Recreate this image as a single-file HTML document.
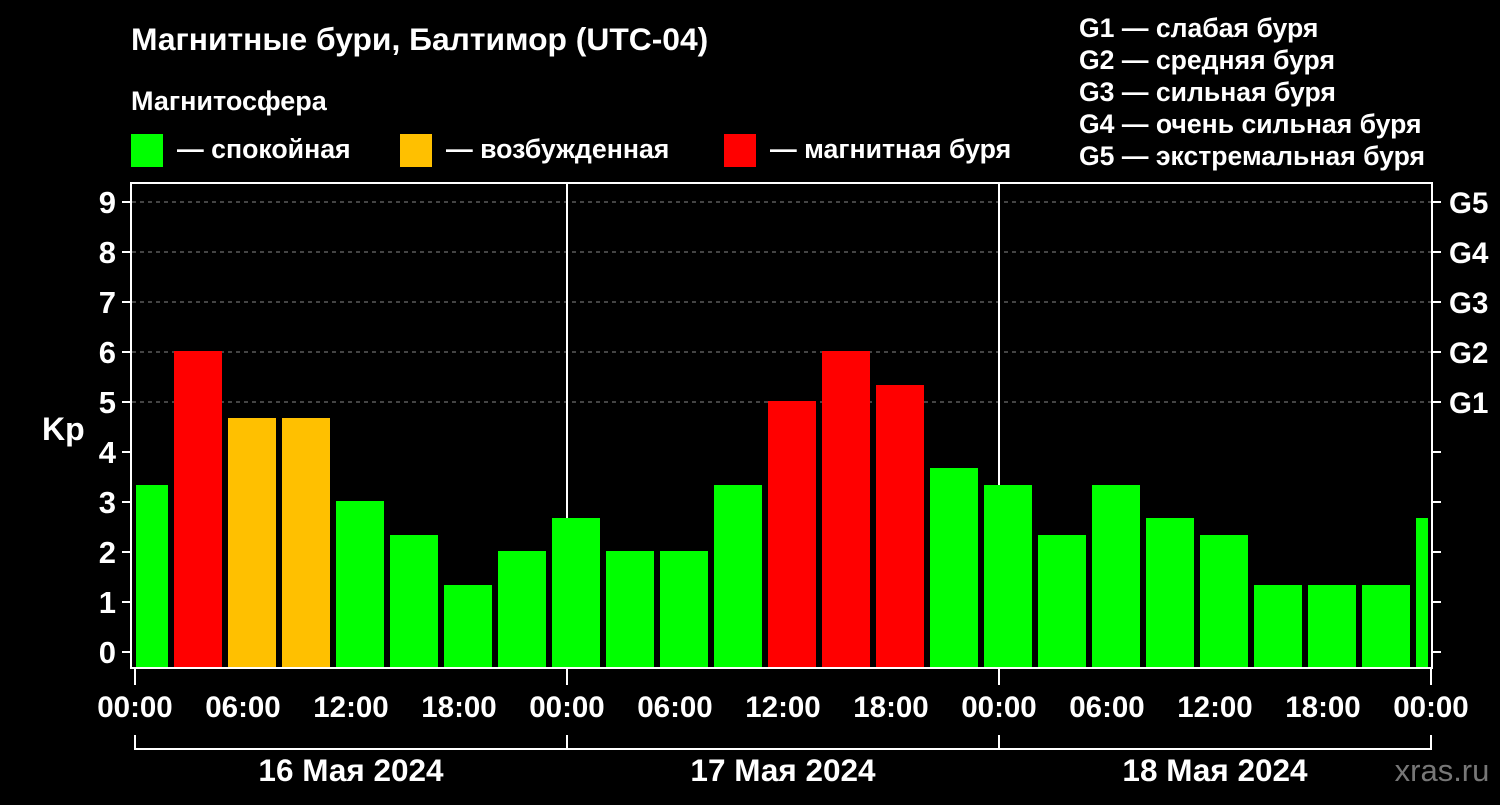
<!DOCTYPE html><html><head><meta charset="utf-8"><style>
body{margin:0;background:#000;width:1500px;height:800px;overflow:hidden}
text{font-family:"Liberation Sans",sans-serif;font-weight:bold;fill:#fff}
</style></head><body>
<svg width="1500" height="800" viewBox="0 0 1500 800">
<text x="131" y="50" font-size="31.8">Магнитные бури, Балтимор (UTC-04)</text>
<text x="131" y="110" font-size="27">Магнитосфера</text>
<rect x="131" y="134" width="32" height="33" fill="#00ff00"/>
<text x="177" y="158" font-size="26.7">— спокойная</text>
<rect x="400" y="134" width="32" height="33" fill="#ffc000"/>
<text x="446" y="158" font-size="26.7">— возбужденная</text>
<rect x="724" y="134" width="32" height="33" fill="#ff0000"/>
<text x="770" y="158" font-size="26.7">— магнитная буря</text>
<g font-size="26.6">
<text x="1079" y="37">G1 — слабая буря</text>
<text x="1079" y="69">G2 — средняя буря</text>
<text x="1079" y="101">G3 — сильная буря</text>
<text x="1079" y="133">G4 — очень сильная буря</text>
<text x="1079" y="165">G5 — экстремальная буря</text>
</g>
<g stroke="#888" stroke-width="1" stroke-dasharray="4,4">
<line x1="132" x2="1431" y1="202" y2="202"/><line x1="132" x2="1431" y1="252" y2="252"/>
<line x1="132" x2="1431" y1="302" y2="302"/><line x1="132" x2="1431" y1="352" y2="352"/>
<line x1="132" x2="1431" y1="402" y2="402"/>
</g>
<g stroke="#fff" stroke-width="2"><line x1="567" y1="183" x2="567" y2="668"/><line x1="999" y1="183" x2="999" y2="668"/></g>
<g>
<rect x="136" y="485" width="32" height="183" fill="#00ff00"/>
<rect x="174" y="351" width="48" height="317" fill="#ff0000"/>
<rect x="228" y="418" width="48" height="250" fill="#ffc000"/>
<rect x="282" y="418" width="48" height="250" fill="#ffc000"/>
<rect x="336" y="501" width="48" height="167" fill="#00ff00"/>
<rect x="390" y="535" width="48" height="133" fill="#00ff00"/>
<rect x="444" y="585" width="48" height="83" fill="#00ff00"/>
<rect x="498" y="551" width="48" height="117" fill="#00ff00"/>
<rect x="552" y="518" width="48" height="150" fill="#00ff00"/>
<rect x="606" y="551" width="48" height="117" fill="#00ff00"/>
<rect x="660" y="551" width="48" height="117" fill="#00ff00"/>
<rect x="714" y="485" width="48" height="183" fill="#00ff00"/>
<rect x="768" y="401" width="48" height="267" fill="#ff0000"/>
<rect x="822" y="351" width="48" height="317" fill="#ff0000"/>
<rect x="876" y="385" width="48" height="283" fill="#ff0000"/>
<rect x="930" y="468" width="48" height="200" fill="#00ff00"/>
<rect x="984" y="485" width="48" height="183" fill="#00ff00"/>
<rect x="1038" y="535" width="48" height="133" fill="#00ff00"/>
<rect x="1092" y="485" width="48" height="183" fill="#00ff00"/>
<rect x="1146" y="518" width="48" height="150" fill="#00ff00"/>
<rect x="1200" y="535" width="48" height="133" fill="#00ff00"/>
<rect x="1254" y="585" width="48" height="83" fill="#00ff00"/>
<rect x="1308" y="585" width="48" height="83" fill="#00ff00"/>
<rect x="1362" y="585" width="48" height="83" fill="#00ff00"/>
<rect x="1416" y="518" width="12" height="150" fill="#00ff00"/>
</g>
<g stroke="#fff" stroke-width="2" fill="none">
<rect x="131" y="183" width="1301" height="485"/>
<path d="M122 202H131M122 252H131M122 302H131M122 352H131M122 402H131M122 452H131M122 502H131M122 552H131M122 602H131M122 652H131"/>
<path d="M1432 202H1441M1432 252H1441M1432 302H1441M1432 352H1441M1432 402H1441M1432 452H1441M1432 502H1441M1432 552H1441M1432 602H1441M1432 652H1441"/>
<path d="M135 668V685M567 668V685M999 668V685M1431 668V685M135 735V749H1431V735M567 735V749M999 735V749"/>
</g>
<g font-size="31" text-anchor="end">
<text x="116" y="213">9</text><text x="116" y="263">8</text><text x="116" y="313">7</text><text x="116" y="363">6</text><text x="116" y="413">5</text><text x="116" y="463">4</text><text x="116" y="513">3</text><text x="116" y="563">2</text><text x="116" y="613">1</text><text x="116" y="663">0</text>
</g>
<text x="42" y="440" font-size="32">Kp</text>
<g font-size="29.5"><text x="1449" y="213">G5</text><text x="1449" y="263">G4</text><text x="1449" y="313">G3</text><text x="1449" y="363">G2</text><text x="1449" y="413">G1</text></g>
<g font-size="29.5" text-anchor="middle">
<text x="135" y="717">00:00</text><text x="243" y="717">06:00</text><text x="351" y="717">12:00</text><text x="459" y="717">18:00</text>
<text x="567" y="717">00:00</text><text x="675" y="717">06:00</text><text x="783" y="717">12:00</text><text x="891" y="717">18:00</text>
<text x="999" y="717">00:00</text><text x="1107" y="717">06:00</text><text x="1215" y="717">12:00</text><text x="1323" y="717">18:00</text><text x="1431" y="717">00:00</text>
<text x="351" y="781" font-size="31.5">16 Мая 2024</text><text x="783" y="781" font-size="31.5">17 Мая 2024</text><text x="1215" y="781" font-size="31.5">18 Мая 2024</text>
</g>
<text x="1442" y="781" font-size="31" text-anchor="middle" style="fill:#777;font-weight:normal">xras.ru</text>
</svg></body></html>
